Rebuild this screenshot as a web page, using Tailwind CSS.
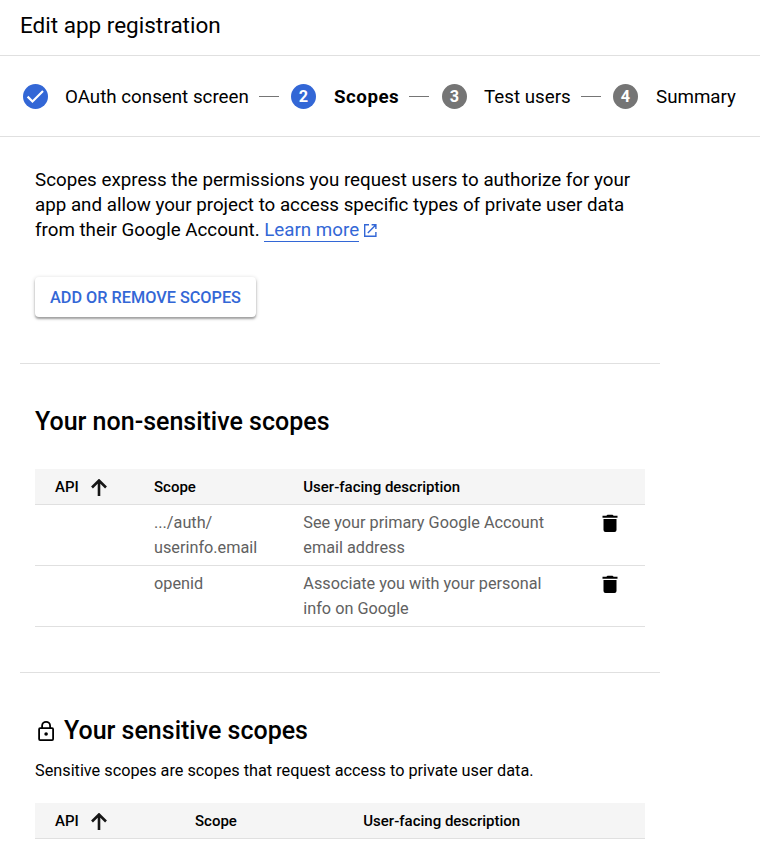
<!DOCTYPE html>
<html lang="en">
<head>
<meta charset="utf-8">
<title>Edit app registration</title>
<script src="https://cdn.jsdelivr.net/npm/@tailwindcss/browser@4"></script>
</head>
<body class="bg-white font-[Roboto,sans-serif] text-black w-[760px] h-[842px] overflow-hidden">
<header class="h-14 border-b border-[#e0e0e0] pl-5 flex items-center">
  <h1 class="text-[22.5px] leading-[30px] -mt-1.5 whitespace-nowrap">Edit app registration</h1>
</header>
<nav class="h-[81px] border-b border-[#e0e0e0] pl-[23px] flex items-center text-[18.75px] whitespace-nowrap">
  <div class="w-[42px] shrink-0"><svg class="size-[25px]" viewBox="0 0 25 25"><circle cx="12.5" cy="12.5" r="12.5" fill="#3367d6"/><path d="M4.6 12.6l4.9 4.9L20 7" fill="none" stroke="#fff" stroke-width="2.2"/></svg></div>
  <div class="w-[194px] shrink-0 pt-0.5">OAuth consent screen</div>
  <div class="w-5 h-px bg-[#757575] shrink-0"></div>
  <div class="ml-3 size-[25px] rounded-full bg-[#3367d6] text-white text-[16.25px] font-bold leading-[25px] text-center shrink-0">2</div>
  <div class="ml-[18px] w-[75px] shrink-0 font-bold tracking-[0.5px] pt-0.5">Scopes</div>
  <div class="w-5 h-px bg-[#757575] shrink-0"></div>
  <div class="ml-[13px] size-[25px] rounded-full bg-[#757575] text-white text-[16.25px] font-bold leading-[25px] text-center shrink-0">3</div>
  <div class="ml-[17px] w-[97px] shrink-0 pt-0.5">Test users</div>
  <div class="w-5 h-px bg-[#757575] shrink-0"></div>
  <div class="ml-3 size-[25px] rounded-full bg-[#757575] text-white text-[16.25px] font-bold leading-[25px] text-center shrink-0">4</div>
  <div class="ml-[18px] shrink-0 pt-0.5">Summary</div>
</nav>
<main class="ml-5 w-[640px]">
  <section class="h-[227px] border-b border-[#e0e0e0] pl-[15px] pt-[31px]">
    <p class="text-[18.75px] leading-[25px] whitespace-nowrap">Scopes express the permissions you request users to authorize for your<br>app and allow your project to access specific types of private user data<br>from their Google Account. <a class="text-[#3367d6] border-b border-current">Learn more</a><svg class="inline-block size-[15px] ml-1 -mt-0.5" viewBox="0 0 15 15" fill="none" stroke="#3367d6" stroke-width="1.4"><path d="M6 1.7H1.7v11.6h11.2V9M8.6 1.7h4.3v4.3M12.7 2L4.8 9.9"/></svg></p>
    <button class="mt-[34px] w-[221px] h-10 pt-0.5 rounded-[4px] text-[#3367d6] font-medium text-[16.25px] whitespace-nowrap shadow-[0_2px_2px_rgba(0,0,0,.28),0_1px_4px_rgba(0,0,0,.2)]">ADD OR REMOVE SCOPES</button>
  </section>
  <section class="h-[309px] border-b border-[#e0e0e0] px-[15px] pt-[42px]">
    <h2 class="text-[25px] leading-8 font-medium">Your non-sensitive scopes</h2>
    <div class="mt-[31px] text-[16.25px] leading-[25px] text-[#616161]">
      <div class="h-9 bg-[#f5f5f5] border-b border-[#e0e0e0] grid grid-cols-[119px_149px_1fr] items-center text-[15px] font-medium text-black">
        <div class="pl-5 flex items-center gap-[11px]"><span class="pt-0.5">API</span><svg class="size-[18px] mt-0.5" viewBox="0 0 18 18" fill="none" stroke="#161616" stroke-width="2.6"><path d="M9 17V1.5M2 8.5l7-7 7 7"/></svg></div><div class="pt-0.5">Scope</div><div class="pt-0.5 pl-[0.3px]">User-facing description</div>
      </div>
      <div class="h-[61px] border-b border-[#e0e0e0] pt-[5px] grid grid-cols-[119px_149px_1fr_43px] whitespace-nowrap">
        <div></div><div>.../auth/<br>userinfo.email</div><div class="pl-[0.3px]">See your primary Google Account<br>email address</div><svg class="w-4 h-[18px] mt-1" viewBox="0 0 16 18"><path d="M1.5 5h13v11q0 2-2 2h-9q-2 0-2-2zM.5 1.8h3.8L5.5.7h5l1.2 1.1h3.8v2H.5z"/></svg>
      </div>
      <div class="h-[61px] border-b border-[#e0e0e0] pt-[5px] grid grid-cols-[119px_149px_1fr_43px] whitespace-nowrap">
        <div></div><div>openid</div><div class="pl-[0.3px]">Associate you with your personal<br>info on Google</div><svg class="w-4 h-[18px] mt-1" viewBox="0 0 16 18"><path d="M1.5 5h13v11q0 2-2 2h-9q-2 0-2-2zM.5 1.8h3.8L5.5.7h5l1.2 1.1h3.8v2H.5z"/></svg>
      </div>
    </div>
  </section>
  <section class="px-[15px] pt-[42px]">
    <h2 class="text-[25px] leading-8 font-medium flex items-center"><svg class="w-[22px] h-[22px] mr-[7px]" viewBox="0 0 22 22" fill="none" stroke="#000" stroke-width="1.8"><rect x="4.1" y="8.2" width="14" height="11.9" rx="1"/><path d="M7.1 8V5.8a4 4 0 018 0V8"/><circle cx="11.1" cy="14" r="1.8" fill="#000" stroke="none"/></svg>Your sensitive scopes</h2>
    <p class="mt-[11px] text-[16.25px] leading-[25px]">Sensitive scopes are scopes that request access to private user data.</p>
    <div class="mt-5 h-9 bg-[#f5f5f5] border-b border-[#e0e0e0] grid grid-cols-[160px_168px_1fr] items-center text-[15px] font-medium">
      <div class="pl-5 flex items-center gap-[11px]"><span class="pt-0.5">API</span><svg class="size-[18px] mt-0.5" viewBox="0 0 18 18" fill="none" stroke="#161616" stroke-width="2.6"><path d="M9 17V1.5M2 8.5l7-7 7 7"/></svg></div><div class="pt-0.5">Scope</div><div class="pt-0.5 pl-[0.3px]">User-facing description</div>
    </div>
  </section>
</main>
</body>
</html>
